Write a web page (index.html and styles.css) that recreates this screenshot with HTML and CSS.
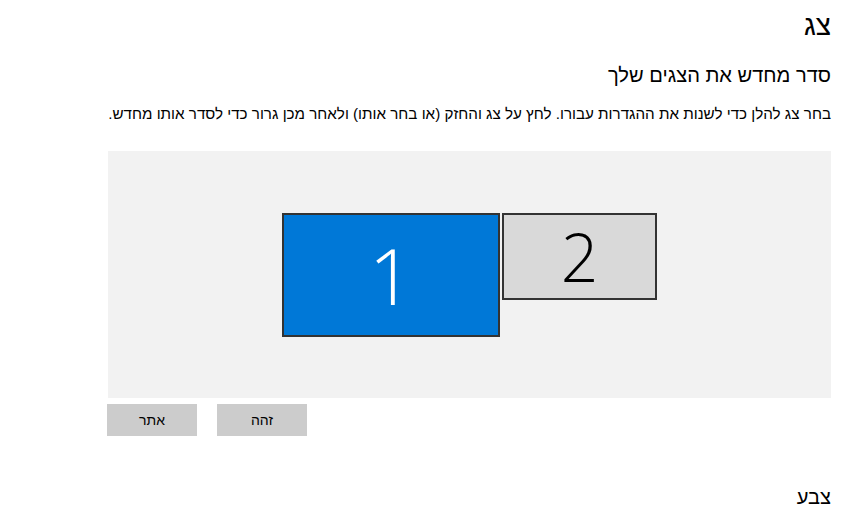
FILE: index.html
```html
<!DOCTYPE html>
<html lang="he" dir="rtl">
<head>
<meta charset="utf-8">
<link rel="stylesheet" href="styles.css">
</head>
<body>
<main class="page">
  <h1 class="title">צג</h1>
  <h2 class="subtitle">סדר מחדש את הצגים שלך</h2>
  <p class="desc">בחר צג להלן כדי לשנות את ההגדרות עבורו. לחץ על צג והחזק (או בחר אותו) ולאחר מכן גרור כדי לסדר אותו מחדש.</p>
  <div class="arrange">
    <div class="monitors">
      <div class="mon mon-1"><span>1</span></div>
      <div class="mon mon-2"><span>2</span></div>
    </div>
  </div>
  <div class="buttons">
    <button class="btn">זהה</button>
    <button class="btn">אתר</button>
  </div>
  <h2 class="subtitle section">צבע</h2>
</main>
</body>
</html>
```

FILE: styles.css
```css
html, body {
  margin: 0;
  padding: 0;
  background: #ffffff;
}
body {
  width: 850px;
  height: 512px;
  overflow: hidden;
  font-family: "Liberation Sans", "DejaVu Sans", sans-serif;
  color: #000000;
}
.page {
  padding: 8px 19px 0 108px;
}
.title {
  margin: 0;
  font-size: 28px;
  font-weight: 300;
  line-height: 36px;
}
.subtitle {
  margin: 16px 0 0 0;
  font-size: 20.1px;
  font-weight: 400;
  line-height: 30px;
}
.desc {
  margin: 14px 0 0 -4px;
  font-size: 15.2px;
  line-height: 20px;
  white-space: nowrap;
}
.arrange {
  margin-top: 27px;
  height: 247px;
  background: #f2f2f2;
  display: flex;
  justify-content: center;
  align-items: center;
  direction: ltr;
}
.monitors {
  display: flex;
  align-items: flex-start;
  gap: 2px;
}
.mon {
  box-sizing: border-box;
  border: 2px solid #333333;
  display: flex;
  align-items: center;
  justify-content: center;
  font-family: "Open Sans", "Lato", sans-serif;
  font-weight: 300;
}
.mon-1 {
  width: 218px;
  height: 124px;
  background: #0078d7;
  color: #ffffff;
  font-size: 78px;
}
.mon-2 {
  width: 155px;
  height: 87px;
  background: #d9d9d9;
  color: #000000;
  font-size: 66px;
}
.mon span {
  line-height: 1;
}
.buttons {
  margin: 6px 0 0 -1px;
  display: flex;
  justify-content: flex-end;
  gap: 20px;
}
.btn {
  width: 90px;
  height: 32px;
  border: none;
  background: #cccccc;
  font-family: "Liberation Sans", "DejaVu Sans", sans-serif;
  font-size: 14px;
  color: #000000;
  padding: 0;
}
.section {
  margin-top: 46px;
}
```
